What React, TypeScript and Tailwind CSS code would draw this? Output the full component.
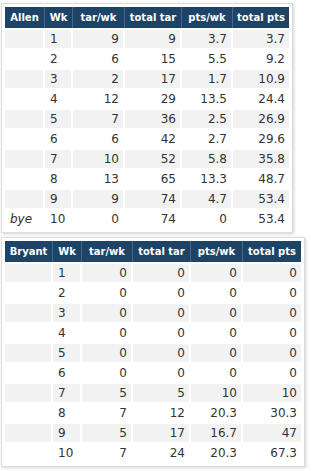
import React from "react";

type Row = { name?: string; wk: number; tar: number; tot: number; pts: number; totPts: number };

const allen: Row[] = [
    { wk: 1, tar: 9, tot: 9, pts: 3.7, totPts: 3.7 },
    { wk: 2, tar: 6, tot: 15, pts: 5.5, totPts: 9.2 },
    { wk: 3, tar: 2, tot: 17, pts: 1.7, totPts: 10.9 },
    { wk: 4, tar: 12, tot: 29, pts: 13.5, totPts: 24.4 },
    { wk: 5, tar: 7, tot: 36, pts: 2.5, totPts: 26.9 },
    { wk: 6, tar: 6, tot: 42, pts: 2.7, totPts: 29.6 },
    { wk: 7, tar: 10, tot: 52, pts: 5.8, totPts: 35.8 },
    { wk: 8, tar: 13, tot: 65, pts: 13.3, totPts: 48.7 },
    { wk: 9, tar: 9, tot: 74, pts: 4.7, totPts: 53.4 },
    { name: "bye", wk: 10, tar: 0, tot: 74, pts: 0, totPts: 53.4 },
];

const bryant: Row[] = [
    { wk: 1, tar: 0, tot: 0, pts: 0, totPts: 0 },
    { wk: 2, tar: 0, tot: 0, pts: 0, totPts: 0 },
    { wk: 3, tar: 0, tot: 0, pts: 0, totPts: 0 },
    { wk: 4, tar: 0, tot: 0, pts: 0, totPts: 0 },
    { wk: 5, tar: 0, tot: 0, pts: 0, totPts: 0 },
    { wk: 6, tar: 0, tot: 0, pts: 0, totPts: 0 },
    { wk: 7, tar: 5, tot: 5, pts: 10, totPts: 10 },
    { wk: 8, tar: 7, tot: 12, pts: 20.3, totPts: 30.3 },
    { wk: 9, tar: 5, tot: 17, pts: 16.7, totPts: 47 },
    { wk: 10, tar: 7, tot: 24, pts: 20.3, totPts: 67.3 },
];

const StatsTable = ({ player, rows, widths }: { player: string; rows: Row[]; widths: number[] }) => {
    const heads = [player, "Wk", "tar/wk", "total tar", "pts/wk", "total pts"];
    return (
        <div className="ml-[1px] w-fit border border-[#dcdcdc] bg-white pl-[3px] pr-[3px] pt-[3px] pb-[4px] shadow-[1px_1px_3px_rgba(0,0,0,0.18)]">
            <table className="border-separate border-spacing-0 text-[12px] text-[#333]" style={{ fontFamily: '"DejaVu Sans", Verdana, sans-serif' }}>
                <colgroup>
                    {widths.map((w, i) => (
                        <col key={i} style={{ width: w }} />
                    ))}
                </colgroup>
                <thead>
                    <tr className="h-[21px] bg-[#1d4466]">
                        {heads.map((h, i) => (
                            <th key={h} className={`px-0 text-center text-[10px] font-bold text-white ${i < 5 ? "border-r border-[#47678a]" : ""}`}>
                                {h}
                            </th>
                        ))}
                    </tr>
                </thead>
                <tbody>
                    {rows.map((r, i) => (
                        <tr key={r.wk} className={`h-[20px] ${i % 2 === 0 ? "bg-[#f2f2f2]" : "bg-white"}`}>
                            <td className="border-t-2 border-r-2 border-white px-[5px] italic">{r.name}</td>
                            <td className="border-t-2 border-r-2 border-white px-[5px] text-left">{r.wk}</td>
                            <td className="border-t-2 border-r-2 border-white px-[4px] text-right">{r.tar}</td>
                            <td className="border-t-2 border-r-2 border-white px-[4px] text-right">{r.tot}</td>
                            <td className="border-t-2 border-r-2 border-white px-[4px] text-right">{r.pts}</td>
                            <td className="border-t-2 border-white px-[4px] text-right">{r.totPts}</td>
                        </tr>
                    ))}
                </tbody>
            </table>
        </div>
    );
};

export default function App() {
    return (
        <div className="flex min-h-[471px] w-[316px] flex-col gap-[4px] bg-white pt-[3px]">
            <StatsTable player="Allen" rows={allen} widths={[40, 28, 52, 57, 51, 56]} />
            <StatsTable player="Bryant" rows={bryant} widths={[48, 29, 51, 58, 52, 58]} />
        </div>
    );
}
